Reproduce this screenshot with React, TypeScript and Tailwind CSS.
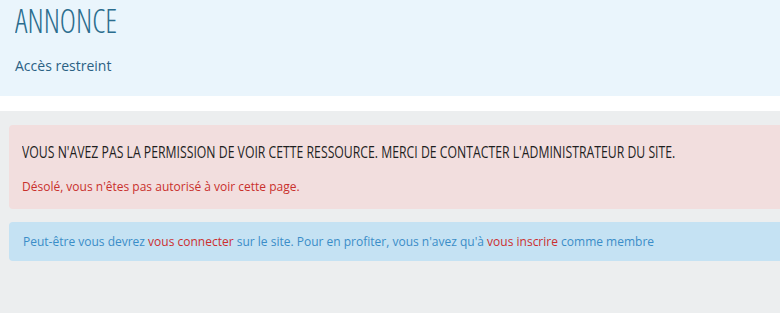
export default function App() {
  return (
    <div className="w-[780px] h-[313px] overflow-hidden bg-[#eceeef] font-['Open_Sans',sans-serif]">
      <div className="h-[96px] bg-[#eaf5fc] pl-[15px] pt-[3px]">
        <h1 className="text-[33px] leading-[36px] font-light text-[#2b6d8e] [font-stretch:75%] origin-left scale-x-[0.93] whitespace-nowrap w-fit">ANNONCE</h1>
        <p className="mt-[17px] text-[14px] leading-[20px] text-[#2b6184]">Accès restreint</p>
      </div>
      <div className="h-[15px] bg-white" />
      <div className="pl-[9px] pt-[14px]">
        <div className="h-[84px] rounded-l-[4px] bg-[#f2dede] pl-[13px] pt-[15px]">
          <h2 className="text-[17px] leading-[24px] text-[#1f1f1f] whitespace-nowrap origin-left scale-x-[0.72] w-fit">VOUS N'AVEZ PAS LA PERMISSION DE VOIR CETTE RESSOURCE. MERCI DE CONTACTER L'ADMINISTRATEUR DU SITE.</h2>
          <p className="mt-[14px] text-[12px] leading-[18px] text-[#c9302c]">Désolé, vous n'êtes pas autorisé à voir cette page.</p>
        </div>
        <div className="mt-[13px] h-[39px] rounded-l-[4px] bg-[#c5e2f3] pl-[14px] flex items-center">
          <p className="text-[12px] leading-[18px] text-[#3a8dc8] whitespace-nowrap">
            Peut-être vous devrez <span className="text-[#cc2f2f]">vous connecter</span> sur le site. Pour en profiter, vous n'avez qu'à <span className="text-[#cc2f2f]">vous inscrire</span> comme membre
          </p>
        </div>
      </div>
    </div>
  );
}
